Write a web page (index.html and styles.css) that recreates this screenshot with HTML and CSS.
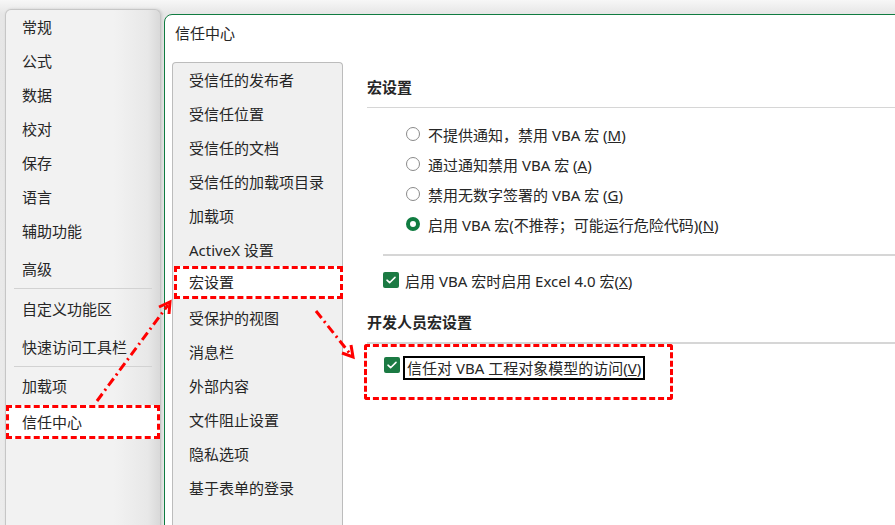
FILE: index.html
```html
<!DOCTYPE html>
<html lang="zh-CN">
<head>
  <meta charset="UTF-8" />
  <title>信任中心</title>
  <link rel="stylesheet" href="styles.css">
</head>
<body>
<div class="page">

  <!-- Options sidebar -->
  <aside class="sidebar">
    <div class="side-item">常规</div>
    <div class="side-item">公式</div>
    <div class="side-item">数据</div>
    <div class="side-item">校对</div>
    <div class="side-item">保存</div>
    <div class="side-item">语言</div>
    <div class="side-item">辅助功能</div>
    <div class="side-item gap-4">高级</div>
    <div class="side-sep"></div>
    <div class="side-item gap-3">自定义功能区</div>
    <div class="side-item gap-4">快速访问工具栏</div>
    <div class="side-sep"></div>
    <div class="side-item gap-2">加载项</div>
    <div class="side-item gap-2 marked">信任中心</div>
  </aside>

  <!-- Trust center dialog -->
  <section class="dialog">
    <div class="dialog-title">信任中心</div>
    <div class="dialog-body">
      <nav class="trust-nav">
        <div class="nav-item">受信任的发布者</div>
        <div class="nav-item">受信任位置</div>
        <div class="nav-item">受信任的文档</div>
        <div class="nav-item">受信任的加载项目录</div>
        <div class="nav-item">加载项</div>
        <div class="nav-item">ActiveX 设置</div>
        <div class="nav-item marked">宏设置</div>
        <div class="nav-item">受保护的视图</div>
        <div class="nav-item">消息栏</div>
        <div class="nav-item">外部内容</div>
        <div class="nav-item">文件阻止设置</div>
        <div class="nav-item">隐私选项</div>
        <div class="nav-item">基于表单的登录</div>
      </nav>

      <div class="content">
        <h3 class="heading">宏设置</h3>
        <div class="rule"></div>
        <div class="radios">
          <div class="radio-row"><span class="radio"></span><span>不提供通知，禁用 VBA 宏 (<u>M</u>)</span></div>
          <div class="radio-row"><span class="radio"></span><span>通过通知禁用 VBA 宏 (<u>A</u>)</span></div>
          <div class="radio-row"><span class="radio"></span><span>禁用无数字签署的 VBA 宏 (<u>G</u>)</span></div>
          <div class="radio-row"><span class="radio on"></span><span>启用 VBA 宏(不推荐；可能运行危险代码)(<u>N</u>)</span></div>
        </div>
        <div class="rule thick inset"></div>
        <div class="check-row">
          <span class="check"><svg width="16" height="16" viewBox="0 0 16 16"><path d="M4 8.2l2.6 2.5L12 5.4" fill="none" stroke="#fff" stroke-width="1.6" stroke-linecap="round" stroke-linejoin="round"/></svg></span>
          <span>启用 VBA 宏时启用 Excel 4.0 宏(<u>X</u>)</span>
        </div>
        <h3 class="heading dev">开发人员宏设置</h3>
        <div class="rule thick"></div>
        <div class="check-row dev-row">
          <span class="check"><svg width="16" height="16" viewBox="0 0 16 16"><path d="M4 8.2l2.6 2.5L12 5.4" fill="none" stroke="#fff" stroke-width="1.6" stroke-linecap="round" stroke-linejoin="round"/></svg></span>
          <span class="focus">信任对 VBA 工程对象模型的访问(<u>V</u>)</span>
        </div>
      </div>
    </div>
  </section>

  <!-- annotations -->
  <div class="callout"></div>
  <svg class="arrows" width="895" height="525" viewBox="0 0 895 525">
    <g fill="none" stroke="#ff0000" stroke-width="3">
      <line x1="97" y1="401" x2="168" y2="305" stroke-dasharray="9 4 2 4"/>
      <polyline points="159,307 170,302 169,314"/>
      <line x1="316" y1="311" x2="351" y2="355" stroke-dasharray="9 4 2 4"/>
      <polyline points="351,345 353,357 342,353"/>
    </g>
  </svg>
</div>
</body>
</html>
```

FILE: styles.css
```css
/* Base */
* {
  box-sizing: border-box;
}

body {
  margin: 0;
  height: 525px;
  overflow: hidden;
  font-family: "Noto Sans", "Noto Sans CJK SC", sans-serif;
  font-size: 15px;
  color: #262626;
  background: linear-gradient(#f7f7f7, #e6e6e6 14px, #ececec);
}

.page {
  position: relative;
  display: flex;
  align-items: flex-start;
  gap: 3px;
  height: 525px;
  padding: 9px 0 0 5px;
}

/* Sidebar */
.sidebar {
  width: 156px;
  height: 530px;
  border: 1px solid #c6c6c6;
  border-bottom: none;
  border-radius: 6px 6px 0 0;
  background: linear-gradient(to right, #f2f2f2 70%, #e8e8e8 92%, #d9d9d9);
  box-shadow: 1px 0 3px rgba(0, 0, 0, 0.12);
}

.side-item {
  height: 34px;
  line-height: 34px;
  padding-left: 16px;
  white-space: nowrap;
}

.gap-2 { margin-top: 2px; }
.gap-3 { margin-top: 3px; }
.gap-4 { margin-top: 4px; }

.side-sep {
  height: 1px;
  margin: 2px 8px 0;
  background: #d2d2d2;
}

.side-item.marked {
  background: #fff;
  border: 3px dashed #ff0000;
  line-height: 28px;
  padding-left: 13px;
}

/* Dialog */
.dialog {
  flex: 1;
  height: 520px;
  margin: 5px -20px 0 0;
  padding-left: 7px;
  background: #fff;
  border: 1px solid #107c41;
  border-radius: 8px 0 0 0;
}

.dialog-title {
  height: 47px;
  padding: 8px 0 0 3px;
  line-height: 20px;
}

.dialog-body {
  display: flex;
  gap: 24px;
}

.trust-nav {
  width: 171px;
  height: 470px;
  flex-shrink: 0;
  background: #f0f0f0;
  border: 1px solid #bcbcbc;
  border-bottom: none;
  border-radius: 4px 4px 0 0;
}

.nav-item {
  height: 34px;
  line-height: 34px;
  padding-left: 16px;
  white-space: nowrap;
}

.nav-item.marked {
  height: 33px;
  margin: -1px -1px 2px 1px;
  line-height: 27px;
  padding-left: 12px;
  background: #fff;
  border: 3px dashed #ff0000;
}

/* Content */
.content {
  flex: 1;
  padding-top: 15px;
}

.heading {
  margin: 0;
  font-size: 15px;
  font-weight: 700;
  line-height: 20px;
}

.heading.dev {
  margin-top: 17px;
}

.rule {
  height: 1px;
  margin-top: 10px;
  background: #d6d6d6;
}

.rule.thick {
  height: 2px;
}

.rule.inset {
  margin: 15px 0 0 16px;
}

.radios {
  margin: 11px 0 0 39px;
}

.radio-row {
  display: flex;
  align-items: center;
  gap: 8px;
  height: 30px;
  white-space: nowrap;
}

.radio {
  width: 14px;
  height: 14px;
  border: 1px solid #8a8a8a;
  border-radius: 50%;
  background: #fff;
}

.radio.on {
  border: 4px solid #107c41;
}

.check-row {
  display: flex;
  align-items: center;
  gap: 6px;
  height: 30px;
  margin: 9px 0 0 16px;
  white-space: nowrap;
}

.check {
  width: 16px;
  height: 16px;
  border-radius: 2px;
  background: #1b7a43;
}

.check svg {
  display: block;
}

.dev-row {
  margin: 6px 0 0 17px;
  gap: 3px;
}

.focus {
  margin-top: 5px;
  padding: 0 2px;
  line-height: 20px;
  border: 2px solid #000;
}

/* Annotations */
.callout {
  position: absolute;
  left: 364px;
  top: 344px;
  width: 309px;
  height: 56px;
  border: 3px dashed #ff0000;
  border-radius: 3px;
}

.arrows {
  position: absolute;
  left: 0;
  top: 0;
  pointer-events: none;
}
```
